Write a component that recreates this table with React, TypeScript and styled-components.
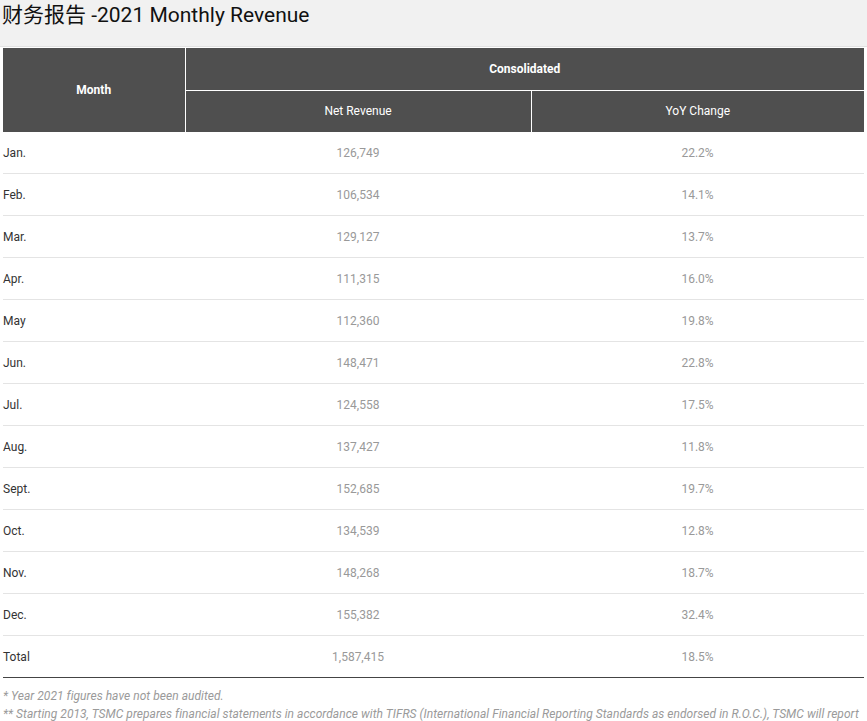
import React from "react";
import styled, { createGlobalStyle } from "styled-components";

const GlobalStyle = createGlobalStyle`
  html, body { margin: 0; padding: 0; background: #fff; }
  body { font-family: Roboto, "Noto Sans CJK SC", sans-serif; }
`;

const TitleBar = styled.header`
  background: #f1f1f1;
  border-bottom: 1px solid #e2e2e2;
  height: 46px;
  box-sizing: content-box;
  padding: 0 2px;
`;

const Title = styled.h1`
  margin: 0;
  padding-top: 3px;
  font-family: Roboto, "Noto Sans CJK SC", sans-serif;
  font-weight: 400;
  font-size: 21px;
  line-height: 24px;
  color: #111;
`;

const Wrap = styled.main`
  padding: 1px 3px 0;
`;

const Table = styled.table`
  width: 861px;
  border-collapse: collapse;
  table-layout: fixed;
  font-family: Roboto, sans-serif;
  font-size: 12px;
`;

const HeadCell = styled.th<{ $bold?: boolean; $left?: boolean; $top?: boolean; $h: number }>`
  background: #4f4f4f;
  color: #fff;
  font-weight: ${(p) => (p.$bold ? 700 : 400)};
  text-align: center;
  height: ${(p) => p.$h}px;
  padding: 0;
  box-sizing: border-box;
  border-left: ${(p) => (p.$left ? "1px solid #fff" : "0")};
  border-top: ${(p) => (p.$top ? "1px solid #fff" : "0")};
`;

const Row = styled.tr<{ $last?: boolean }>`
  border-bottom: 1px solid ${(p) => (p.$last ? "#444" : "#e4e4e4")};
`;

const LabelCell = styled.td`
  height: 41px;
  padding: 0;
  color: #333;
  text-align: left;
`;

const ValueCell = styled.td`
  height: 41px;
  padding: 0;
  color: #999;
  text-align: center;
`;

const Notes = styled.div`
  margin-top: 9px;
  font-family: Roboto, sans-serif;
  font-style: italic;
  font-size: 12px;
  line-height: 18px;
  letter-spacing: 0.04px;
  color: #9a9a9a;
  white-space: nowrap;
  overflow: hidden;
`;

const Note = styled.p`
  margin: 0;
`;

const data: [string, string, string][] = [
  ["Jan.", "126,749", "22.2%"],
  ["Feb.", "106,534", "14.1%"],
  ["Mar.", "129,127", "13.7%"],
  ["Apr.", "111,315", "16.0%"],
  ["May", "112,360", "19.8%"],
  ["Jun.", "148,471", "22.8%"],
  ["Jul.", "124,558", "17.5%"],
  ["Aug.", "137,427", "11.8%"],
  ["Sept.", "152,685", "19.7%"],
  ["Oct.", "134,539", "12.8%"],
  ["Nov.", "148,268", "18.7%"],
  ["Dec.", "155,382", "32.4%"],
  ["Total", "1,587,415", "18.5%"],
];

export default function App() {
  return (
    <>
      <GlobalStyle />
      <TitleBar>
        <Title>财务报告 -2021 Monthly Revenue</Title>
      </TitleBar>
      <Wrap>
        <Table>
          <colgroup>
            <col style={{ width: 182 }} />
            <col style={{ width: 346 }} />
            <col style={{ width: 333 }} />
          </colgroup>
          <thead>
            <tr>
              <HeadCell $bold rowSpan={2} $h={42}>Month</HeadCell>
              <HeadCell $bold colSpan={2} $left $h={42}>Consolidated</HeadCell>
            </tr>
            <tr>
              <HeadCell $left $top $h={42}>Net Revenue</HeadCell>
              <HeadCell $left $top $h={42}>YoY Change</HeadCell>
            </tr>
          </thead>
          <tbody>
            {data.map(([m, v, y], i) => (
              <Row key={m} $last={i === data.length - 1}>
                <LabelCell>{m}</LabelCell>
                <ValueCell>{v}</ValueCell>
                <ValueCell>{y}</ValueCell>
              </Row>
            ))}
          </tbody>
        </Table>
        <Notes>
          <Note>* Year 2021 figures have not been audited.</Note>
          <Note>
            ** Starting 2013, TSMC prepares financial statements in accordance with TIFRS (International Financial Reporting Standards as endorsed in R.O.C.), TSMC will report
          </Note>
        </Notes>
      </Wrap>
    </>
  );
}
